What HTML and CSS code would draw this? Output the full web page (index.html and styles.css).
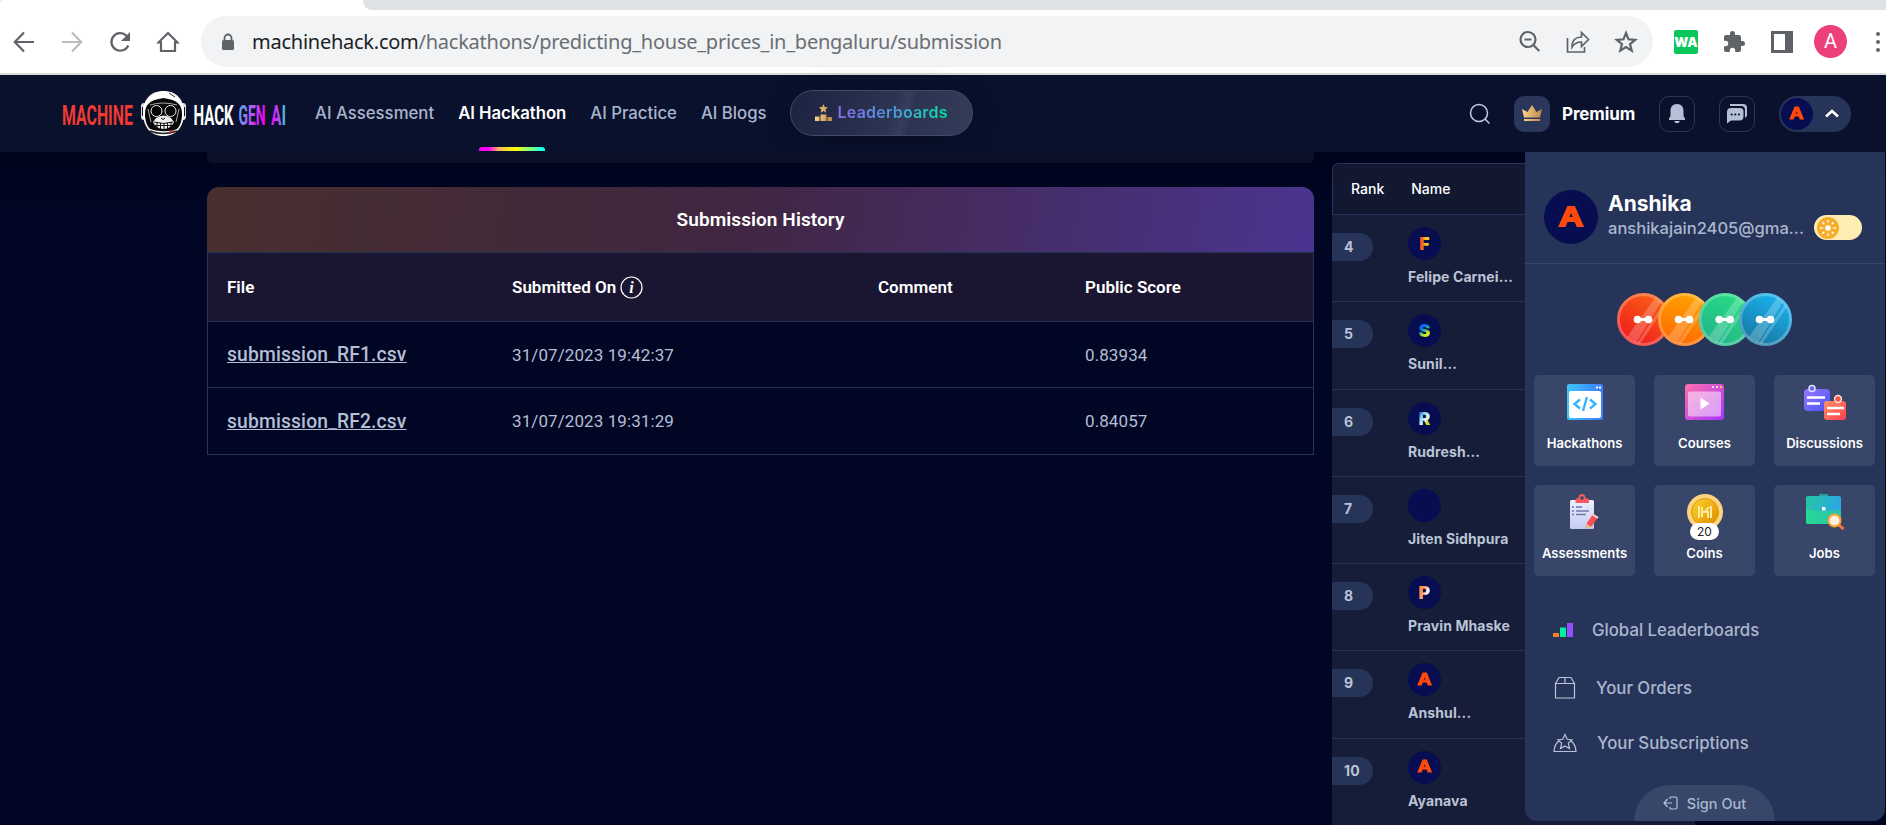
FILE: index.html
```html
<!DOCTYPE html>
<html lang="en">
<head>
<meta charset="utf-8">
<title>MachineHack - Submission</title>
<link rel="stylesheet" href="styles.css">
</head>
<body>
<header class="chrome">
  <div class="tabstrip"><div class="tab"></div><div class="tabs-rest"></div></div>
  <div class="toolbar">
    <div class="nav-buttons">
      <svg width="24" height="24" viewBox="0 0 24 24" class="ci"><path d="M22 12H3M12 2.500L2.800 12l9.200 9.500"/></svg>
      <svg width="24" height="24" viewBox="0 0 24 24" class="ci faded"><path d="M2 12h19M12 2.500l9.200 9.500-9.200 9.500"/></svg>
      <svg width="24" height="24" viewBox="0 0 24 24" class="ci"><path d="M20.300 15.500A8.800 8.800 0 1 1 18.500 5.700"/><path class="solid" d="M22 2v9h-9z"/></svg>
      <svg width="24" height="24" viewBox="0 0 24 24" class="ci"><path d="M2.500 12.500L12 3l9.500 9.500H19V21H5v-8.500z"/></svg>
    </div>
    <div class="address">
      <svg width="14" height="18" viewBox="0 0 14 18"><path d="M3.500 8V5a3.500 3.500 0 0 1 7 0v3" fill="none" stroke="#5f6368" stroke-width="1.800"/><rect x="1" y="7" width="12" height="10" rx="1.500" fill="#5f6368"/></svg>
      <div class="url"><span>machinehack.com</span>/hackathons/predicting_house_prices_in_bengaluru/submission</div>
      <div class="address-icons">
        <svg width="24" height="24" viewBox="0 0 24 24" class="ci"><circle cx="10" cy="9.500" r="7.500"/><path d="M6.500 9.500h7M15.300 15l6 6"/></svg>
        <svg width="26" height="24" viewBox="0 0 26 24" class="ci thin"><path d="M2.500 8v14h17v-5M7 17c0-7 4-10 9.500-10V2.500l7 7-7 7V12C12 12 9.500 13 7 17z"/></svg>
        <svg width="24" height="24" viewBox="0 0 24 24" class="ci"><path d="M12 3l2.500 6.300 6.700.500-5.200 4.300 1.700 6.600-5.700-3.600-5.700 3.600L8 14.100 2.800 9.800l6.700-.5z"/></svg>
      </div>
    </div>
    <div class="ext">
      <span class="wa">WA</span>
      <svg width="24" height="24" viewBox="0 0 24 24"><path fill="#5f6368" d="M20.500 11H19V7a2 2 0 0 0-2-2h-4V3.500a2.500 2.500 0 0 0-5 0V5H4a2 2 0 0 0-2 2v3.800h1.500a2.700 2.700 0 0 1 0 5.400H2V20a2 2 0 0 0 2 2h3.800v-1.500a2.700 2.700 0 0 1 5.400 0V22H17a2 2 0 0 0 2-2v-4h1.500a2.500 2.500 0 0 0 0-5z"/></svg>
      <svg class="side" width="22" height="22" viewBox="0 0 22 22"><path fill="#5f6368" fill-rule="evenodd" d="M0 0h22v22H0zM3 3v16h11V3z"/></svg>
      <span class="account">A</span>
      <span class="dots"><i></i><i></i><i></i></span>
    </div>
  </div>
</header>

<nav class="sitenav">
  <svg class="logo" width="226" height="50" viewBox="0 0 226 50">
    <defs>
      <linearGradient id="gen" x1="0" x2="1" y1="0" y2=".3"><stop offset="0" stop-color="#49b5ef"/><stop offset=".45" stop-color="#9b72f2"/><stop offset="1" stop-color="#f505f5"/></linearGradient>
      <linearGradient id="ai" x1="0" x2="1"><stop offset="0" stop-color="#f505f5"/><stop offset=".5" stop-color="#b14cf2"/><stop offset="1" stop-color="#31dbdc"/></linearGradient>
    </defs>
    <g class="logotype">
      <text transform="translate(0 36) scale(.6 1)" textLength="118" lengthAdjust="spacingAndGlyphs" fill="#ef3b34">MACHINE</text>
      <text transform="translate(131.500 36) scale(.58 1)" textLength="69" lengthAdjust="spacingAndGlyphs" fill="#fff">HACK</text>
      <text transform="translate(176.500 36) scale(.53 1)" textLength="51" lengthAdjust="spacingAndGlyphs" fill="url(#gen)">GEN</text>
      <text transform="translate(209 36) scale(.6 1)" textLength="25" lengthAdjust="spacingAndGlyphs" fill="url(#ai)">AI</text>
    </g>
    <g>
      <rect x="79" y="14" width="6" height="17" rx="3" fill="#ddd"/><rect x="118" y="14" width="6" height="17" rx="3" fill="#ddd"/>
      <path d="M80.500 18v9M122.500 18v9" stroke="#111"/>
      <path d="M101.500 2C88 2 81 11 81 24s7 23 20.500 23S122 37 122 24 115 2 101.500 2z" fill="#fff"/>
      <path d="M83 25c0-9 4-14 18.500-16C116 11 120 16 120 25c0 7-2 12-5 15-7 3-18 3-27 0-3-3-5-8-5-15z" fill="#080808"/>
      <path d="M88 16q13-4 27 0M86 20l3 13M117 20l-3 13" stroke="#aaa" fill="none"/>
      <path d="M94 29q8-5 15 0l3 4q-3 7-10.500 7T91 33z" fill="#eee"/>
      <circle cx="94.500" cy="22" r="5.500" fill="#000" stroke="#eee" stroke-width="1"/><circle cx="108.500" cy="22" r="5.500" fill="#000" stroke="#eee" stroke-width="1"/>
      <path d="M92 33q9 3 19 0M92 36.500h19M95 33v6M98.500 34v6M102 34v6M105.500 34v6M109 33v5M99 29l2 1.500 2-1.500" stroke="#111" fill="none"/>
      <path d="M88 42q13 5 27 0" stroke="#222" stroke-width="1.500" fill="none"/><path d="M107 43.500l5-2" stroke="#d33" stroke-width="1.500"/>
      <path d="M107 4l6 4" stroke="#333"/>
    </g>
  </svg>
  <div class="links">
    <a>AI Assessment</a><a class="active">AI Hackathon</a><a>AI Practice</a><a>AI Blogs</a>
  </div>
  <a class="lb-button">
    <svg width="17" height="18" viewBox="0 0 17 18"><defs><linearGradient id="gold"><stop stop-color="#ffd58a"/><stop offset="1" stop-color="#b98550"/></linearGradient></defs><path fill="url(#gold)" d="M8.500 0l1.300 3 3.200.3-2.400 2.200.7 3.200-2.800-1.700-2.800 1.700.7-3.200L4 3.300 7.200 3zM5.500 10.500h6V17h-6zM0 12.500h4.500V17H0zM12.500 13H17v4h-4.500z"/></svg>
    <span>Leaderboards</span>
  </a>
  <div class="tools">
    <svg class="search" width="22" height="22" viewBox="0 0 22 22" fill="none" stroke="#c3cde0" stroke-width="1.500"><circle cx="10" cy="10" r="8.500"/><path d="M16 16l4.500 4.500"/></svg>
    <span class="crown"><svg width="20" height="17" viewBox="0 0 20 17"><path fill="url(#gold)" d="M0 4l5.500 3L10 0l4.500 7L20 4l-2 8.500H2zM2 14h16v2H2z"/></svg></span>
    <b class="premium">Premium</b>
    <span class="box bell"><svg width="18" height="21" viewBox="0 0 18 21"><path fill="#b4c0d6" d="M9 1c4.500 0 6.500 3 6.500 7v5L17 15.500v1.500H1v-1.500L2.500 13V8c0-4 2-7 6.500-7zM6 18h6q-1 2.300-3 2.300T6 18z"/></svg></span>
    <span class="box"><svg width="22" height="22" viewBox="0 0 22 22"><path fill="#b4c0d6" d="M4 1h13q4 0 4 4v8l-2 2V7q0-4-4-4H4zM5 5h9q3.500 0 3.500 3.500v5q0 4-4 4H5L1 20.500V9q0-4 4-4z"/><g fill="#0a112c"><circle cx="5.700" cy="11.500" r="1.100"/><circle cx="9.300" cy="11.500" r="1.100"/><circle cx="12.900" cy="11.500" r="1.100"/></g></svg></span>
    <span class="profile"><i class="avatar av-sm"><em class="a">A</em></i><svg width="14" height="9" viewBox="0 0 14 9" fill="none" stroke="#fff" stroke-width="2.500"><path d="M1 7.500l6-5.500 6 5.500"/></svg></span>
  </div>
</nav>

<main class="page">
  <div class="left">
    <div class="previous-card"></div>
    <section class="history">
      <h2>Submission History</h2>
      <div class="row head"><div>File</div><div class="on">Submitted On <svg width="23" height="23" viewBox="0 0 23 23"><circle cx="11.500" cy="11.500" r="10.500" fill="none" stroke="#fff" stroke-width="1.200"/><text x="11.500" y="17" text-anchor="middle" class="info">i</text></svg></div><div>Comment</div><div>Public Score</div></div>
      <div class="row"><a>submission_RF1.csv</a><div>31/07/2023 19:42:37</div><div></div><div>0.83934</div></div>
      <div class="row"><a>submission_RF2.csv</a><div>31/07/2023 19:31:29</div><div></div><div>0.84057</div></div>
    </section>
  </div>
  <aside class="board">
    <div class="board-head"><span>Rank</span><span>Name</span></div>
    <div class="entry"><span class="rank">4</span><div><i class="avatar f"><em>F</em></i><p>Felipe Carnei...</p></div></div>
    <div class="entry"><span class="rank">5</span><div><i class="avatar s"><em>S</em></i><p>Sunil...</p></div></div>
    <div class="entry"><span class="rank">6</span><div><i class="avatar r"><em>R</em></i><p>Rudresh...</p></div></div>
    <div class="entry"><span class="rank">7</span><div><i class="avatar"></i><p>Jiten Sidhpura</p></div></div>
    <div class="entry"><span class="rank">8</span><div><i class="avatar p"><em>P</em></i><p>Pravin Mhaske</p></div></div>
    <div class="entry"><span class="rank">9</span><div><i class="avatar"><em class="a">A</em></i><p>Anshul...</p></div></div>
    <div class="entry"><span class="rank">10</span><div><i class="avatar"><em class="a">A</em></i><p>Ayanava</p></div></div>
  </aside>

  <div class="menu">
    <div class="who">
      <i class="avatar av-lg"><em class="a">A</em></i>
      <div class="id"><b>Anshika</b><span>anshikajain2405@gma...</span></div>
      <span class="toggle"><svg width="22" height="22" viewBox="0 0 22 22"><circle cx="11" cy="11" r="11" fill="#f6ad27"/><circle cx="11" cy="11" r="2.800" fill="#fff"/><path stroke="#fff" stroke-width="1.400" d="M11 3v2.800M11 16.200V19M3 11h2.800M16.200 11H19M5.300 5.300l2 2M14.700 14.700l2 2M16.700 5.300l-2 2M7.300 14.700l-2 2"/></svg></span>
    </div>
    <div class="badges">
      <svg width="176" height="54" viewBox="0 0 176 54">
        <defs>
          <linearGradient id="b1" x1=".2" y1="1" x2=".8" y2="0"><stop stop-color="#ed1720"/><stop offset="1" stop-color="#fb6413"/></linearGradient>
          <linearGradient id="b2" x1=".2" y1="1" x2=".5" y2="0"><stop stop-color="#ff6500"/><stop offset="1" stop-color="#ffa200"/></linearGradient>
          <linearGradient id="b3" x1=".2" y1="1" x2=".8" y2="0"><stop stop-color="#23b18b"/><stop offset="1" stop-color="#28df83"/></linearGradient>
          <linearGradient id="b4" x1=".3" y1="1" x2=".8" y2="0"><stop stop-color="#18769f"/><stop offset="1" stop-color="#1ab6f5"/></linearGradient>
          <g id="shine"><circle cx="26.500" cy="26.500" r="25" fill="none" stroke="#fff" stroke-opacity=".25" stroke-width="3"/><path d="M38 5l6 4L19 50l-9-6zM46 11l2 3-25 37-3-1z" fill="#fff" opacity=".22"/><path d="M20.500 26.500h11" stroke="#fff" stroke-width="3"/><circle cx="20.500" cy="26.500" r="3.800" fill="#fff"/><circle cx="31.500" cy="26.500" r="3.800" fill="#fff"/></g>
        </defs>
        <g><circle cx="26.500" cy="26.500" r="26.500" fill="url(#b1)"/><use href="#shine"/></g>
        <g transform="translate(41)"><circle cx="26.500" cy="26.500" r="26.500" fill="url(#b2)"/><use href="#shine"/></g>
        <g transform="translate(81.700)"><circle cx="26.500" cy="26.500" r="26.500" fill="url(#b3)"/><use href="#shine"/></g>
        <g transform="translate(122)"><circle cx="26.500" cy="26.500" r="26.500" fill="url(#b4)"/><use href="#shine"/></g>
      </svg>
    </div>
    <div class="tiles">
      <a><svg width="36" height="36" viewBox="0 0 36 36"><defs><linearGradient id="t1"><stop stop-color="#40c4ff"/><stop offset="1" stop-color="#3d7df8"/></linearGradient></defs><rect width="36" height="36" rx="2" fill="url(#t1)"/><rect x="2" y="7" width="32" height="27" rx="2" fill="#fff"/><path d="M29 2.500h2v2h-2zM32 2.500h2v2h-2z" fill="#fff"/><path d="M13 15.500l-5.500 4.500 5.500 4.500M23 15.500l5.500 4.500-5.500 4.500M20 13l-4 14" fill="none" stroke="#36b3fa" stroke-width="2.400"/></svg>Hackathons</a>
      <a><svg width="39" height="36" viewBox="0 0 39 36"><defs><linearGradient id="t2" x2="1" y2="1"><stop stop-color="#ff70ae"/><stop offset="1" stop-color="#a533ff"/></linearGradient></defs><rect width="39" height="36" rx="3" fill="url(#t2)"/><rect x="3" y="7.500" width="33" height="25" rx="2" fill="#fff" opacity=".5"/><path d="M27 2h2v2h-2zM31 2h2v2h-2z" fill="#ffd3e9"/><path d="M35 2h2v2h-2z" fill="#ffca35"/><path d="M15.500 13.500v12l9-6z" fill="#fff"/></svg>Courses</a>
      <a><svg width="44" height="36" viewBox="0 0 44 36"><defs><linearGradient id="t3" x2="1" y2="1"><stop stop-color="#9878ff"/><stop offset="1" stop-color="#4852f8"/></linearGradient><linearGradient id="t4" x2="1" y2="1"><stop stop-color="#ff9363"/><stop offset="1" stop-color="#ff3d4d"/></linearGradient></defs><rect x="1" y="5" width="26" height="22" rx="4" fill="url(#t3)"/><rect x="21" y="17" width="22" height="19" rx="3" fill="url(#t4)"/><circle cx="9" cy="4.500" r="3" fill="#6467f5" stroke="#dfe2ff" stroke-width="1.500"/><circle cx="35" cy="15" r="3.400" fill="#fa5147" stroke="#ffe3d6" stroke-width="1.500"/><path d="M4 13.500h18M4 19.500h13M24 24h17M24 30h13" stroke="#fff" stroke-width="2.400"/></svg>Discussions</a>
      <a><svg width="36" height="36" viewBox="0 0 36 36"><defs><linearGradient id="t5" x2="0" y2="1"><stop stop-color="#edf0ff"/><stop offset="1" stop-color="#c3cbf1"/></linearGradient></defs><rect x="3" y="6" width="24" height="29" rx="1.500" fill="url(#t5)"/><path d="M8.500 9V6q0-2 3-2 0-4 3.500-4t3.500 4q3.500 0 3.500 2v3z" fill="#fa5a5d"/><circle cx="15" cy="4" r="1.800" fill="#374669"/><path d="M5 13h2M9 13h6M5 17h2M9 17h13M5 20.500h2M9 20.500h10" stroke="#6c7ab2" stroke-width="1.500"/><path d="M19 35l1-6 6-9 5 3-6 9z" fill="#fa4e53"/><path d="M19 35l1-5 4 3z" fill="#f4c18a"/><path d="M25.500 20.500l5.500 3.300" stroke="#ffd4d5" stroke-width="2"/></svg>Assessments</a>
      <a class="coins"><svg width="36" height="36" viewBox="0 0 36 36"><defs><linearGradient id="t6" x2="1" y2="1"><stop stop-color="#ffd52c"/><stop offset="1" stop-color="#dc8b00"/></linearGradient></defs><circle cx="18" cy="18" r="18" fill="#ffd37c"/><circle cx="18" cy="18" r="13.500" fill="url(#t6)" stroke="#d59714"/><path d="M12 12v12M15 13v10M15 18h6M21 17v7M24 12v12M22 13l-4 5" stroke="#ffec9f" stroke-width="2" fill="none"/></svg><span>20</span>Coins</a>
      <a><svg width="40" height="36" viewBox="0 0 40 36"><defs><linearGradient id="t7" y2=".3"><stop stop-color="#25c7a0"/><stop offset="1" stop-color="#2da6e8"/></linearGradient><linearGradient id="t8"><stop stop-color="#26d894"/><stop offset="1" stop-color="#29c2ae"/></linearGradient></defs><path d="M14 4V1q0-1 1-1h7q1 0 1 1v3z" fill="#22a5a0"/><rect x="1" y="2" width="35" height="28" rx="2" fill="url(#t7)"/><path d="M1 15q17 4 35 0v13q0 2-2 2H3q-2 0-2-2z" fill="url(#t8)"/><path d="M17 13h3.500v3.500H17z" fill="#fff"/><path d="M34 31l4.500 4" stroke="#fb743e" stroke-width="3"/><circle cx="29.500" cy="26.500" r="6" fill="#ffefe2" stroke="#faa027" stroke-width="2"/></svg>Jobs</a>
    </div>
    <div class="items">
      <a class="global"><svg width="20" height="14" viewBox="0 0 20 14"><path d="M0 10h6v4H0z" fill="#f08025"/><path d="M7 4.500h6V14H7z" fill="#00f2a0"/><path d="M14 0h6v14h-6z" fill="#974cff"/></svg>Global Leaderboards</a>
      <a><svg width="22" height="24" viewBox="0 0 22 24" class="line"><path d="M1.500 7.500h19V22h-19zM1.500 7.500l3.500-6h12l3.500 6M11 1.500v6"/></svg>Your Orders</a>
      <a><svg width="24" height="20" viewBox="0 0 24 20" class="line"><path d="M6 8q-4.500 3-5 10.500h22Q22.500 11 18 8M12 1.500l2.200 4.800 4.800.600-3.700 3.400 1.200 5.200L12 13l-4.500 2.500 1.200-5.200L5 6.900l4.800-.6z"/></svg>Your Subscriptions</a>
    </div>
    <a class="signout"><svg width="15" height="14" viewBox="0 0 15 14" class="line"><path d="M1 7h8M4.500 3L1 7l3.500 4M7 3V2q0-1 1-1h4.500q1.500 0 1.500 1.500v9q0 1.500-1.500 1.500H8q-1 0-1-1v-1"/></svg>Sign Out</a>
  </div>
</main>
</body>
</html>
```
FILE: styles.css
```css
* { box-sizing: border-box; }
body { margin: 0; width: 1886px; height: 825px; overflow: hidden; background: #000624; font-family: Inter, "Liberation Sans", sans-serif; color: #fff; }
svg { display: block; flex: none; }

/* Browser frame */
.chrome { height: 75px; background: #fff; border-bottom: 2px solid #dadada; }
.tabstrip { height: 10px; display: flex; background: #dee1e6; }
.tab { width: 372px; background: #fff; border-radius: 3px 0 0 0; }
.tabs-rest { flex: 1; margin-left: -9px; background: #dee1e6; border-radius: 0 0 0 9px; }
.toolbar { height: 63px; display: flex; align-items: center; padding-left: 12px; }
.nav-buttons { display: flex; gap: 24px; width: 189px; }
.ci { fill: none; stroke: #5f6368; stroke-width: 2.2; }
.ci .solid { fill: #5f6368; stroke: none; }
.faded { opacity: .42; }
.thin { stroke-width: 1.7; }
.address { width: 1452px; height: 51px; border-radius: 26px; background: #f1f3f4; display: flex; align-items: center; padding-left: 20px; }
.url { margin: -1px 0 0 17px; color: #6a6e73; font: 20px "Noto Sans", sans-serif; letter-spacing: -.25px; white-space: nowrap; }
.url span { color: #202124; }
.address-icons { display: flex; gap: 23px; margin-left: auto; margin-right: 15px; }
.ext { display: flex; align-items: center; margin-left: 21px; }
.wa { width: 24px; height: 24px; background: #0bc75b; border-radius: 2px; font: 900 13px/24px Inter, sans-serif; text-align: center; margin-right: 24px; }
.side { margin: 0 21px 0 25px; }
.account { width: 33px; height: 33px; border-radius: 50%; background: #ec407a; font: 20px/33px Roboto, sans-serif; text-align: center; }
.dots { display: flex; flex-direction: column; gap: 4px; margin-left: 29px; }
.dots i { width: 4px; height: 4px; border-radius: 50%; background: #5f6368; }

/* Site navigation */
.sitenav { height: 77px; background: #0a112c; display: flex; align-items: center; padding-left: 62px; }
.logo { margin-right: 27px; overflow: visible; }
.logotype text { font: 700 27px Roboto, sans-serif; }
.links { display: flex; gap: 24px; height: 77px; font-size: 16.75px; font-weight: 500; color: #a9b6cd; line-height: 76px; white-space: nowrap; }
.links .active { color: #fff; font-weight: 600; letter-spacing: -.05px; display: flex; flex-direction: column; align-items: center; }
.active::after { content: ""; width: 66px; height: 4px; margin-top: -4px; border-radius: 3px 3px 0 0; background: linear-gradient(90deg, #f0f 15%, #fb5 30%, #ff0 55%, #0ff); }
.lb-button { width: 183px; height: 46px; margin-left: 23px; border: 1px solid #42496a; border-radius: 23px; background: linear-gradient(105deg, #1c2340, #2c3452 55%, #363e5c 62%, #2c3452 66%, #343c59); display: flex; align-items: center; gap: 6px; padding-left: 24px; margin-top: -1px; font-size: 16px; font-weight: 600; letter-spacing: .2px; box-shadow: 0 5px 25px #070d24; }
.lb-button span { margin-top: -2px; background: linear-gradient(90deg, #8c6cf0, #4e96dc 50%, #02e6a2); -webkit-background-clip: text; color: transparent; }
.tools { margin-left: auto; margin-right: 35px; display: flex; align-items: center; }
.search { margin-right: 23px; }
.crown, .box { width: 36px; height: 36px; border-radius: 10px; display: flex; align-items: center; justify-content: center; }
.crown { background: #2b365b; }
.premium { width: 109px; padding-left: 12px; font-size: 17px; letter-spacing: -.1px; }
.box { border: 1px solid #2b365b; }
.bell { margin-right: 24px; }
.profile { width: 72px; height: 36px; margin-left: 24px; border-radius: 18px; background: #27345a; display: flex; align-items: center; gap: 12px; padding-left: 2px; }

/* Round letter avatars */
.avatar { width: 33px; height: 33px; border-radius: 50%; background: #060d51; display: flex; align-items: center; justify-content: center; font-size: 18px; flex: none; }
.avatar em { font: 900 18px Inter, sans-serif; -webkit-background-clip: text; background-clip: text; color: transparent; }
.avatar .a { font: 700 16px "Liberation Sans", sans-serif; color: #ff4a0c; -webkit-text-stroke: 1.2px #ff4a0c; transform: scaleX(1.2); }
.f em { background-image: linear-gradient(90deg, #f4552a 25%, #ffc21a 60%); }
.s em { background-image: linear-gradient(145deg, #0867ff 35%, #18b4a4 48%, #d6e818 65%); }
.r em { background-image: linear-gradient(125deg, #3c38d9 15%, #79d8e8 35%, #e3f3ff 58%, #d7df12 70%); }
.p em { background-image: linear-gradient(110deg, #ff8b3c 20%, #ffa987 50%, #f1f6ff 65%); }
.av-sm { width: 32px; height: 32px; }
.av-lg { width: 54px; height: 54px; }
.av-lg .a { font-size: 28px; -webkit-text-stroke-width: 2px; }

/* Page content */
.page { height: 673px; position: relative; display: flex; padding-left: 207px; background: linear-gradient(#00031b, #000624 60px); }
.left { width: 1107px; }
.previous-card { height: 11px; margin-bottom: 24px; background: #0a1128; border-radius: 0 0 5px 5px; }
.history { font: 17px Roboto, sans-serif; color: #b4bfd3; }
.history h2 { margin: 0; height: 65px; border-radius: 12px 12px 0 0; background: linear-gradient(100deg, #472f2e, #402641 48%, #4b3490); color: #fff; font: 600 19px/66px Roboto, sans-serif; letter-spacing: .08px; text-align: center; }
.row { height: 67px; display: grid; grid-template-columns: 285px 366px 207px 1fr; align-items: center; padding-left: 19px; border: 1px solid #27345a; border-top: 0; letter-spacing: .09px; }
.row.head { height: 70px; border-top: 1px solid #27345a; background: #1a1631; color: #fff; font-weight: 600; letter-spacing: 0; }
.row:nth-child(3) { height: 66px; }
.row a { font-size: 19.3px; font-weight: 500; letter-spacing: .15px; text-decoration: underline; }
.on { display: flex; align-items: center; gap: 4px; }
.info { font: italic bold 16px "Liberation Serif", serif; fill: #fff; }

.board { width: 363px; height: 662px; margin: 11px 0 0 18px; background: #161d38; border-radius: 6px 0 0 0; overflow: hidden; }
.board-head { height: 52px; display: flex; align-items: center; gap: 27px; padding: 0 0 2px 18px; border: 1px solid #27345a; border-radius: 6px 0 0 0; background: #11182f; font-size: 14px; font-weight: 500; }
.entry { height: 87.3px; border-bottom: 1px solid #27345a; display: flex; color: #bac4d5; font-weight: 700; font-size: 14px; letter-spacing: .1px; }
.rank { width: 41px; height: 28px; margin: 18px 35px 0 0; padding-left: 12px; border-radius: 0 14px 14px 0; background: #27345a; line-height: 28px; }
.entry .avatar { margin-top: 12px; }
.entry p { margin: 8px 0 0; line-height: 18px; white-space: nowrap; }

/* Account menu */
.menu { position: absolute; left: 1525px; top: 0; width: 360px; height: 669px; border-radius: 0 0 12px 12px; background: #27345a; color: #aab7ce; display: flex; flex-direction: column; }
.who { height: 112px; padding: 38px 0 0 19px; display: flex; align-items: flex-start; border-bottom: 1px solid #384568; }
.id { width: 206px; margin-left: 10px; display: flex; flex-direction: column; white-space: nowrap; font-size: 16.55px; font-weight: 500; line-height: 24px; }
.id b { color: #fff; font-size: 21px; font-weight: 700; line-height: 27px; margin-bottom: -1px; }
.toggle { width: 48px; height: 25px; margin-top: 25px; padding: 2px 3px; background: #fdedb3; border-radius: 13px; }
.badges { height: 111px; padding: 29px 0 0 92px; }
.tiles { display: grid; grid-template-columns: repeat(3, 101px); gap: 19px; padding-left: 9px; }
.tiles a { height: 91px; border-radius: 5px; background: #374669; color: #fff; font-size: 13.1px; font-weight: 600; display: flex; flex-direction: column; align-items: center; gap: 15px; padding-top: 9px; line-height: 17px; }
.coins { position: relative; }
.coins span { position: absolute; top: 38px; left: 36px; width: 29px; height: 17px; border-radius: 9px; background: #fff; color: #222; font-size: 12px; font-weight: 400; text-align: center; }
.items { height: 209px; padding: 24px 0 0 28px; font-size: 16.75px; font-weight: 500; }
.items a { height: 55px; display: flex; align-items: center; gap: 20px; }
.items .global { height: 60px; gap: 19px; margin-bottom: 0; }
.items a:nth-child(2) { padding-left: 1px; }
.line { fill: none; stroke: #b9c5d8; stroke-width: 1.2; }
.signout { width: 141px; height: 36px; margin-left: 109px; border-radius: 36px 36px 0 0; background: #374669; display: flex; align-items: center; justify-content: center; gap: 9px; font-size: 14.5px; font-weight: 500; }
```
